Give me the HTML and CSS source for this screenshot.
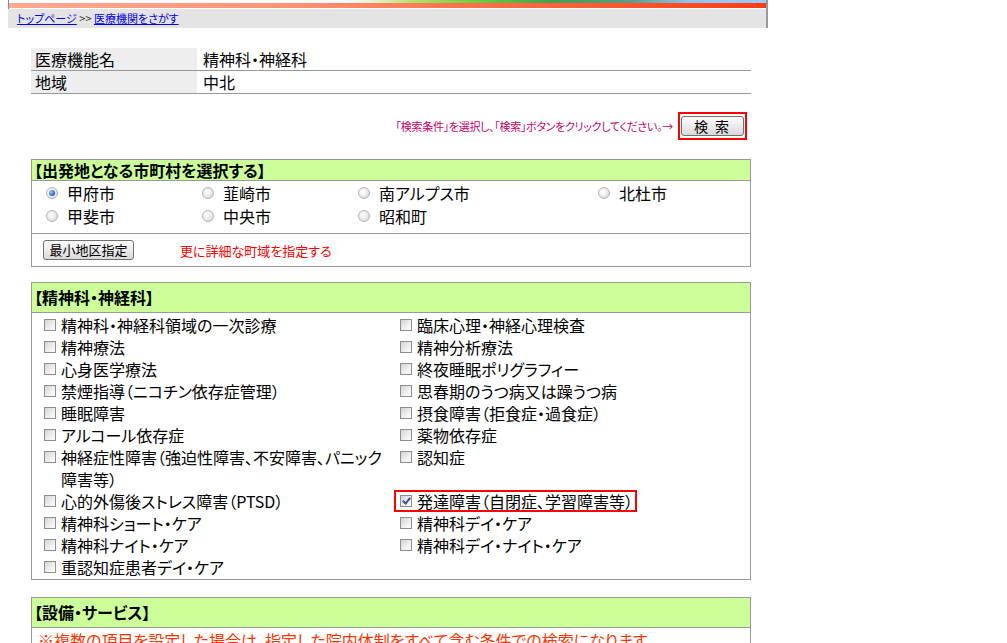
FILE: index.html
```html
<!DOCTYPE html>
<html lang="ja">
<head>
  <meta charset="UTF-8" />
  <title>医療機関をさがす</title>
  <link rel="stylesheet" href="styles.css">
</head>
<body>
  <div class="page">
    <div class="topbar">
      <div class="stripe"></div>
      <div class="orange"></div>
    </div>
    <div class="crumb">
      <a href="#">トップページ</a> &gt;&gt; <a href="#">医療機関をさがす</a>
    </div>

    <div class="main">
      <table class="cond">
        <tr><th>医療機能名</th><td>精神科・神経科</td></tr>
        <tr><th>地域</th><td>中北</td></tr>
      </table>

      <div class="search-row">
        <span class="hint">「検索条件」を選択し、「検索」ボタンをクリックしてください。→</span>
        <span class="search-frame"><button class="btn search-btn">検 索</button></span>
      </div>

      <div class="box area-box">
        <div class="box-head short">【出発地となる市町村を選択する】</div>
        <div class="radios">
          <label class="radio"><span class="rb on"></span>甲府市</label>
          <label class="radio"><span class="rb"></span>韮崎市</label>
          <label class="radio"><span class="rb"></span>南アルプス市</label>
          <label class="radio"><span class="rb"></span>北杜市</label>
          <label class="radio"><span class="rb"></span>甲斐市</label>
          <label class="radio"><span class="rb"></span>中央市</label>
          <label class="radio"><span class="rb"></span>昭和町</label>
        </div>
        <div class="box-foot">
          <button class="btn small-btn">最小地区指定</button>
          <span class="more">更に詳細な町域を指定する</span>
        </div>
      </div>

      <div class="box dept-box">
        <div class="box-head">【精神科・神経科】</div>
        <div class="checks">
          <label class="check"><span class="cb"></span><span>精神科・神経科領域の一次診療</span></label>
          <label class="check"><span class="cb"></span><span>臨床心理・神経心理検査</span></label>
          <label class="check"><span class="cb"></span><span>精神療法</span></label>
          <label class="check"><span class="cb"></span><span>精神分析療法</span></label>
          <label class="check"><span class="cb"></span><span>心身医学療法</span></label>
          <label class="check"><span class="cb"></span><span>終夜睡眠ポリグラフィー</span></label>
          <label class="check"><span class="cb"></span><span>禁煙指導（ニコチン依存症管理）</span></label>
          <label class="check"><span class="cb"></span><span>思春期のうつ病又は躁うつ病</span></label>
          <label class="check"><span class="cb"></span><span>睡眠障害</span></label>
          <label class="check"><span class="cb"></span><span>摂食障害（拒食症・過食症）</span></label>
          <label class="check"><span class="cb"></span><span>アルコール依存症</span></label>
          <label class="check"><span class="cb"></span><span>薬物依存症</span></label>
          <label class="check"><span class="cb"></span><span>神経症性障害（強迫性障害、不安障害、パニック障害等）</span></label>
          <label class="check"><span class="cb"></span><span>認知症</span></label>
          <label class="check"><span class="cb"></span><span>心的外傷後ストレス障害（PTSD）</span></label>
          <label class="check marked"><span class="cb on"></span><span>発達障害（自閉症、学習障害等）</span></label>
          <label class="check"><span class="cb"></span><span>精神科ショート・ケア</span></label>
          <label class="check"><span class="cb"></span><span>精神科デイ・ケア</span></label>
          <label class="check"><span class="cb"></span><span>精神科ナイト・ケア</span></label>
          <label class="check"><span class="cb"></span><span>精神科デイ・ナイト・ケア</span></label>
          <label class="check"><span class="cb"></span><span>重認知症患者デイ・ケア</span></label>
        </div>
      </div>

      <div class="box">
        <div class="box-head">【設備・サービス】</div>
        <p class="note">※複数の項目を設定した場合は、指定した院内体制をすべて含む条件での検索になります。</p>
      </div>
    </div>
  </div>
</body>
</html>
```

FILE: styles.css
```css
body {
  margin: 0;
  background: #fff;
  font-family: "Noto Sans CJK JP", "Noto Sans", sans-serif;
  font-size: 16px;
  color: #000;
  font-feature-settings: "palt";
}
.page {
  margin-left: 8px;
  width: 760px;
}

.topbar {
  height: 9px;
  border-left: 1px solid #888;
  border-right: 2px solid #999;
}
.stripe {
  height: 3px;
  background: linear-gradient(to right, #fff 0%, #fff 44%, #e6f5d0 48%, #b8e070 53%, #6ccc40 62%, #3da050 72%, #5a9c8a 82%, #8fc4f0 90%, #9ccbff 100%);
}
.orange {
  height: 5px;
  background: linear-gradient(to right, #ffa892 0%, #ff9478 35%, #ff6a44 65%, #ff3c12 100%);
}
.crumb {
  height: 19px;
  line-height: 19px;
  padding-left: 9px;
  background: #e4e4e4;
  border-right: 2px solid #999;
  font-size: 11px;
  color: #333;
}
.crumb a {
  color: #0000ee;
}

.main {
  margin-left: 23px;
  width: 720px;
}

.cond {
  margin-top: 20px;
  width: 720px;
  border-collapse: collapse;
}
.cond th,
.cond td {
  height: 22px;
  padding: 0 4px;
  border-bottom: 1px solid #999;
  font-weight: normal;
  text-align: left;
  line-height: 22px;
}
.cond th {
  width: 158px;
  background: #eee;
}
.cond td {
  padding-left: 6px;
}

.search-row {
  display: flex;
  justify-content: flex-end;
  align-items: center;
  gap: 5px;
  margin: 18px 4px 0 0;
}
.hint {
  font-size: 11px;
  letter-spacing: -0.3px;
  color: #cc0066;
}
.search-frame {
  display: block;
  border: 2px solid #ff0000;
  padding: 2px 1px;
}
.btn {
  display: block;
  border: 1px solid #707070;
  border-radius: 3px;
  background: linear-gradient(#fbfbfb, #ececec 50%, #d9d9d9);
  font-family: inherit;
  font-feature-settings: "palt";
  color: #000;
  padding: 0;
}
.search-btn {
  width: 63px;
  height: 20px;
  font-size: 14px;
  line-height: 18px;
  letter-spacing: 2px;
}

.box {
  margin-top: 17px;
  border: 1px solid #999;
}
.box.area-box {
  margin-top: 19px;
}
.box.dept-box {
  margin-top: 15px;
}
.box-head {
  height: 29px;
  line-height: 29px;
  padding-left: 2px;
  background: #ccff99;
  border-bottom: 1px solid #999;
  font-weight: bold;
}
.box-head.short {
  height: 20px;
  line-height: 20px;
}

.radios {
  display: grid;
  grid-template-columns: 156px 156px 240px 1fr;
  padding: 0 0 6px 14px;
  border-bottom: 1px solid #999;
}
.radio {
  display: flex;
  align-items: center;
  gap: 9px;
  height: 23px;
}
.rb {
  width: 10px;
  height: 10px;
  border: 1px solid #b4b4b4;
  border-radius: 50%;
  background: radial-gradient(circle at 40% 40%, #fff 0%, #e8e8e8 55%, #c8c8c8 100%);
  position: relative;
}
.rb.on::after {
  content: "";
  position: absolute;
  left: 2px;
  top: 2px;
  width: 6px;
  height: 6px;
  border-radius: 50%;
  background: radial-gradient(circle at 35% 35%, #9cd0ff, #2b6cc4 60%, #153e86);
}

.box-foot {
  display: flex;
  align-items: center;
  gap: 46px;
  padding: 6px 11px;
}
.small-btn {
  width: 91px;
  height: 20px;
  font-size: 13px;
  line-height: 18px;
}
.more {
  font-size: 13px;
  color: #ff0000;
}

.checks {
  display: grid;
  grid-template-columns: 356px 1fr;
  padding: 1px 0 1px 12px;
}
.check {
  display: flex;
  align-items: flex-start;
  gap: 5px;
  line-height: 22px;
}
.check > span:last-child {
  max-width: 332px;
}
.cb {
  flex: none;
  width: 10px;
  height: 10px;
  margin-top: 5px;
  border: 1px solid #8e8e8e;
  background: linear-gradient(135deg, #d4d4d4, #f4f4f4 70%, #fff);
  position: relative;
}
.cb.on::after {
  content: "";
  position: absolute;
  left: 3px;
  top: 0;
  width: 3px;
  height: 6px;
  border: solid #3c4f9c;
  border-width: 0 2px 2px 0;
  transform: rotate(40deg);
}
.check.marked {
  justify-self: start;
  margin-left: -6px;
  padding: 0 2px 0 4px;
  border: 2px solid #ff0000;
  line-height: 18px;
}
.check.marked .cb {
  margin-top: 3px;
}

.note {
  margin: 0;
  padding: 2px 6px;
  color: #ff3300;
  line-height: 20px;
}
```
